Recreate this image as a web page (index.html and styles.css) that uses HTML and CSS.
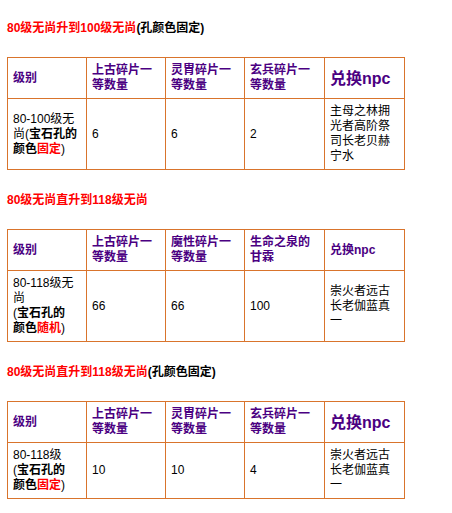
FILE: index.html
```html
<!DOCTYPE html>
<html lang="zh-CN">
<head>
<meta charset="utf-8">
<title>无尚升级</title>
<link rel="stylesheet" href="styles.css">
</head>
<body>
<div class="page">
  <section class="block">
    <div class="title"><span class="red">80级无尚升到100级无尚</span>(孔颜色固定)</div>
    <table class="grid">
      <tr class="head">
        <td class="c1">级别</td>
        <td class="c2">上古碎片一等数量</td>
        <td class="c3">灵胄碎片一等数量</td>
        <td class="c4">玄兵碎片一等数量</td>
        <td class="c5 big">兑换npc</td>
      </tr>
      <tr>
        <td>80-100级无尚(<b>宝石孔的<br>颜色<span class="red">固定</span></b>)</td>
        <td>6</td>
        <td>6</td>
        <td>2</td>
        <td>主母之林拥光者高阶祭司长老贝赫宁水</td>
      </tr>
    </table>
  </section>

  <section class="block">
    <div class="title"><span class="red">80级无尚直升到118级无尚</span></div>
    <table class="grid">
      <tr class="head">
        <td class="c1">级别</td>
        <td class="c2">上古碎片一等数量</td>
        <td class="c3">魔性碎片一等数量</td>
        <td class="c4">生命之泉的甘霖</td>
        <td class="c5">兑换npc</td>
      </tr>
      <tr>
        <td>80-118级无尚<br>(<b>宝石孔的<br>颜色<span class="red">随机</span></b>)</td>
        <td>66</td>
        <td>66</td>
        <td>100</td>
        <td>崇火者远古长老伽蓝真一</td>
      </tr>
    </table>
  </section>

  <section class="block">
    <div class="title"><span class="red">80级无尚直升到118级无尚</span>(孔颜色固定)</div>
    <table class="grid">
      <tr class="head">
        <td class="c1">级别</td>
        <td class="c2">上古碎片一等数量</td>
        <td class="c3">灵胄碎片一等数量</td>
        <td class="c4">玄兵碎片一等数量</td>
        <td class="c5 big">兑换npc</td>
      </tr>
      <tr>
        <td>80-118级<br>(<b>宝石孔的<br>颜色<span class="red">固定</span></b>)</td>
        <td>10</td>
        <td>10</td>
        <td>4</td>
        <td>崇火者远古长老伽蓝真一</td>
      </tr>
    </table>
  </section>
</div>
</body>
</html>
```

FILE: styles.css
```css
html, body {
  margin: 0;
  padding: 0;
  background: #ffffff;
}

body {
  font-family: "Liberation Sans", "Noto Sans CJK SC", sans-serif;
  font-size: 12px;
  line-height: 15px;
  color: #000000;
}

.page {
  padding: 21px 0 0 7px;
}

.block {
  margin-bottom: 23px;
}

.title {
  font-weight: bold;
  line-height: 15px;
  margin-bottom: 21px;
}

.red {
  color: #ff0000;
}

.grid {
  width: 398px;
  table-layout: fixed;
  border-collapse: separate;
  border-spacing: 0;
  border-top: 1px solid #d9742c;
  border-left: 1px solid #d9742c;
}

.grid td {
  box-sizing: border-box;
  padding: 5px;
  border-right: 1px solid #d9742c;
  border-bottom: 1px solid #d9742c;
  vertical-align: middle;
  text-align: left;
  line-height: 15px;
}

.grid .c1,
.grid .c2,
.grid .c3 {
  width: 79px;
}

.grid .c4,
.grid .c5 {
  width: 80px;
}

.head td {
  color: #4b0082;
  font-weight: bold;
}

.head td.big {
  font-size: 16px;
}
```
